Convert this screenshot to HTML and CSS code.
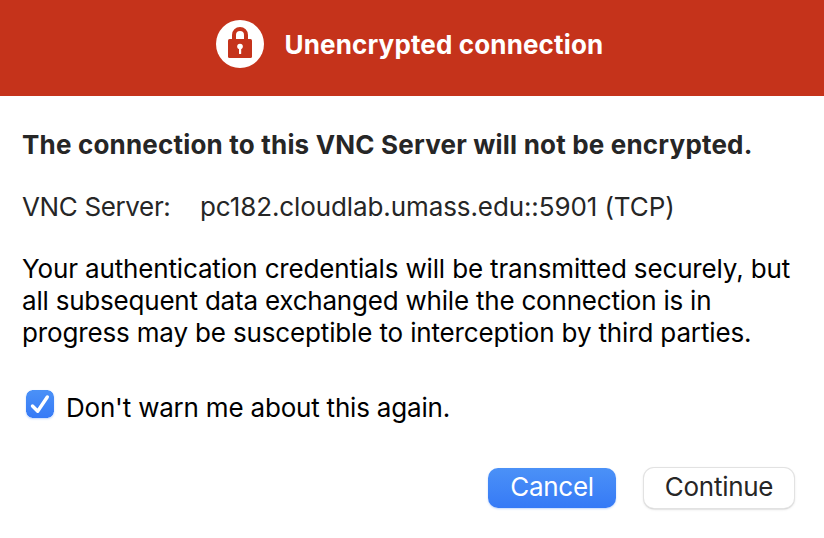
FILE: index.html
```html
<!DOCTYPE html>
<html lang="en">
<head>
<meta charset="utf-8">
<title>Unencrypted connection</title>
<link rel="stylesheet" href="styles.css">
</head>
<body>
<header class="banner">
  <svg class="lock" viewBox="0 0 48 48" aria-hidden="true">
    <circle cx="24" cy="24" r="24" fill="#fff"/>
    <path d="M18 20v-5a6 6 0 0 1 12 0v5" fill="none" stroke="#c5331b" stroke-width="4"/>
    <rect x="12" y="19" width="24" height="19" rx="1.500" fill="#c5331b"/>
    <circle cx="24" cy="26.500" r="2.800" fill="#fff"/>
    <rect x="23" y="27" width="2.200" height="7" rx=".5" fill="#fff"/>
  </svg>
  <h1 class="title">Unencrypted connection</h1>
</header>
<main class="content">
  <h2 class="heading">The connection to this VNC Server will not be encrypted.</h2>
  <div class="server"><span class="label">VNC Server:</span><span class="address">pc182.cloudlab.umass.edu::5901 (TCP)</span></div>
  <p class="message">Your authentication credentials will be transmitted securely, but<br><span class="tight">all subsequent data exchanged while the connection is in</span><br>progress may be susceptible to interception by third parties.</p>
  <label class="option">
    <svg class="check" viewBox="0 0 28 28" aria-hidden="true"><defs><linearGradient id="blue" x2="0" y2="1"><stop stop-color="#4b91f7"/><stop offset="1" stop-color="#367af6"/></linearGradient></defs><rect width="28" height="28" rx="6.500" fill="url(#blue)"/><path d="M6.500 16l5.200 5.200L21.300 7" fill="none" stroke="#fff" stroke-width="3.400" stroke-linecap="round" stroke-linejoin="round"/></svg>
    <span class="option-text">Don't warn me about this again.</span>
  </label>
  <div class="actions"><button class="button primary">Cancel</button><button class="button">Continue</button></div>
</main>
</body>
</html>
```
FILE: styles.css
```css
* { box-sizing: border-box; }
body { margin: 0; background: #fff; color: #000; font: 26px/32px Inter, sans-serif; height: 538px; overflow: hidden; }
h1, h2, p { margin: 0; font-size: inherit; }
.banner { height: 96px; background: #c5331b; color: #fff; display: flex; align-items: flex-start; padding: 20px 0 0 216px; }
.lock { width: 48px; height: 48px; margin-right: 20.6px; }
.title { font-weight: 700; line-height: 50px; white-space: nowrap; letter-spacing: .14px; }
.content { padding: 33px 30px 0 22px; white-space: nowrap; }
.heading { font-weight: 700; color: #262626; letter-spacing: .19px; }
.server { display: flex; margin-top: 30px; color: #262626; }
.label { width: 178px; letter-spacing: -.36px; }
.address { letter-spacing: -.1px; }
.message { margin-top: 30px; letter-spacing: -.15px; }
.tight { letter-spacing: -.21px; }
.option { display: flex; margin-top: 41px; padding-left: 4px; }
.check { width: 28px; height: 28px; margin-right: 12px; border-radius: 6.5px; box-shadow: 0 1px 2px #367af64d; }
.option-text { padding-top: 2px; letter-spacing: -.2px; }
.actions { display: flex; justify-content: flex-end; gap: 28px; margin-top: 44px; }
.button { width: 150px; height: 40px; border: 0; border-radius: 10px; padding: 0 0 2px; font: 26px/36px Inter, sans-serif; letter-spacing: -.28px; color: #262626; background: #fff; box-shadow: 0 0 0 1px #e2e2e2, 0 1px 1px #aaa, 0 1px 3px #ccc; }
.primary { width: 128px; color: #fff; background: linear-gradient(#4b91f7, #367af6); box-shadow: 0 1px 2px #367af64d; }
```
